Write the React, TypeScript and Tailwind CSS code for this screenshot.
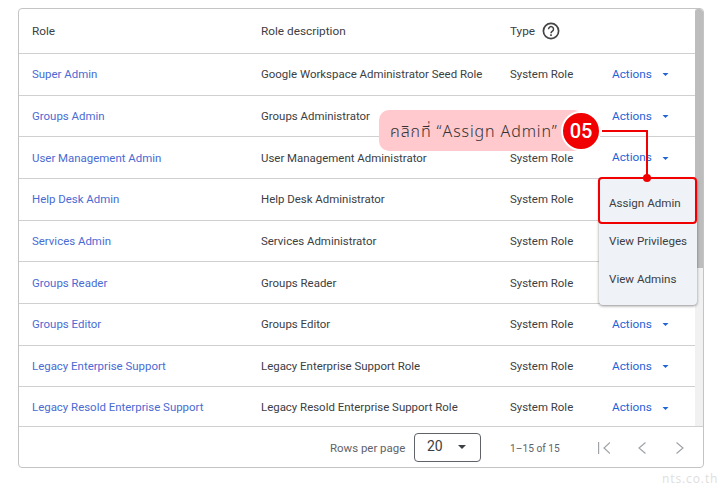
import React from 'react';

const rows = [
  ['Super Admin', 'Google Workspace Administrator Seed Role', true],
  ['Groups Admin', 'Groups Administrator', true],
  ['User Management Admin', 'User Management Administrator', true],
  ['Help Desk Admin', 'Help Desk Administrator', false],
  ['Services Admin', 'Services Administrator', false],
  ['Groups Reader', 'Groups Reader', false],
  ['Groups Editor', 'Groups Editor', true],
  ['Legacy Enterprise Support', 'Legacy Enterprise Support Role', true],
  ['Legacy Resold Enterprise Support', 'Legacy Resold Enterprise Support Role', true],
] as const;

const Caret = ({ className }: { className: string }) => (
  <svg viewBox="0 0 8 4" className={className} fill="currentColor">
    <path d="M0 0h8L4 4z" />
  </svg>
);

export default function App() {
  return (
    <div className="relative h-[491px] w-[720px] overflow-hidden bg-white font-['Roboto',sans-serif] text-[11.45px] text-[#3c4043]">
      <div className="absolute left-[18px] top-[8px] flex h-[460px] w-[686px] flex-col overflow-hidden rounded-[4px] border border-[#c4c4c4]">
        <div className="flex h-[417px] overflow-hidden">
          <div className="min-w-0 flex-1">
            <div className="flex h-[45px] items-center border-b border-[#d0d0d0] pl-[13px] text-[11.8px]">
              <div className="w-[229px] pt-[1px]">Role</div>
              <div className="w-[249px] pt-[1px]">Role description</div>
              <div className="flex items-center gap-[7px]">
                <span className="pt-[1px]">Type</span>
                <svg viewBox="0 0 18 18" className="h-[18px] w-[18px] text-[#444]" fill="none" stroke="currentColor">
                  <circle cx="9" cy="9" r="7.6" strokeWidth="1.7" />
                  <path d="M6.500 7.200a2.500 2.500 0 1 1 3.900 2c-.9.6-1.400 1-1.400 2" strokeWidth="1.500" />
                  <path d="M9 12.300v1.600" strokeWidth="1.600" />
                </svg>
              </div>
            </div>
            {rows.map(([role, desc, hasActions]) => (
              <div key={role} className="flex h-[41.67px] items-center border-b border-[#d0d0d0] pl-[13px] pt-[1px]">
                <div className="w-[229px] text-[#4a6bd3]">{role}</div>
                <div className="w-[249px]">{desc}</div>
                <div className="w-[102px]">System Role</div>
                {hasActions && (
                  <div className="flex items-center text-[11.8px] text-[#1f63d6]">
                    Actions
                    <Caret className="ml-[10px] h-[3px] w-[7px]" />
                  </div>
                )}
              </div>
            ))}
          </div>
          <div className="w-[8px] shrink-0 bg-[#f1f1f1]">
            <div className="h-[259px] rounded-t-[3px] bg-[#bdbdbd]" />
          </div>
        </div>
        <div className="flex flex-1 items-center border-t border-[#d0d0d0] pl-[311px]">
          <span className="w-[84px] pt-[3px] text-[#5f6368]">Rows per page</span>
          <div className="flex h-[29px] w-[67px] items-center rounded-[4px] border border-[#5f6368] pl-[12px] text-[14px]">
            <span className="pb-[1px]">20</span>
            <Caret className="ml-[15px] h-[4px] w-[8px]" />
          </div>
          <span className="ml-[29px] w-[48px] whitespace-nowrap pt-[3px] text-[10.2px] text-[#5f6368]">1–15 of 15</span>
          <div className="ml-[40px] flex items-center pt-[1px] text-[#a0a4a8]">
            <svg viewBox="0 0 12 12" className="h-[12px] w-[12px]" fill="none" stroke="currentColor" strokeWidth="1.200">
              <path d="M.6 0v12M12 .5 6 6l6 5.500" />
            </svg>
            <svg viewBox="0 0 8 12" className="ml-[28px] h-[12px] w-[8px]" fill="none" stroke="currentColor" strokeWidth="1.200">
              <path d="M7.500.5 1 6l6.500 5.500" />
            </svg>
            <svg viewBox="0 0 8 12" className="ml-[30px] h-[12px] w-[8px]" fill="none" stroke="currentColor" strokeWidth="1.200">
              <path d="M.5.5 7 6l-6.500 5.500" />
            </svg>
          </div>
        </div>
      </div>

      {/* dropdown */}
      <div className="absolute left-[599px] top-[178px] h-[127px] w-[98px] rounded-[4px] bg-[#eff2f7] pl-[10px] pt-[18px] text-[11.6px] text-[#3c4043] shadow-[0_1px_3px_rgba(0,0,0,0.45)]">
        <div className="h-[38px] leading-[15px]">Assign Admin</div>
        <div className="h-[38px] whitespace-nowrap leading-[15px]">View Privileges</div>
        <div className="leading-[15px]">View Admins</div>
      </div>
      <div className="absolute left-[598px] top-[177px] h-[47px] w-[99px] rounded-[4px] border-2 border-[#f00000]" />

      {/* callout */}
      <div className="absolute left-[379px] top-[110px] flex h-[41px] w-[205px] items-center rounded-[10px] bg-[#ffc9cd] pl-[11px] font-['Noto_Sans','Noto_Sans_Thai',sans-serif] text-[16px] font-light tracking-[0.9px] text-[#333]">
        คลิกที่ “Assign Admin”
      </div>
      <div className="absolute left-[561px] top-[111px] flex h-[40px] w-[40px] items-center justify-center rounded-full border-2 border-white bg-[#f00000] font-['Roboto',sans-serif] text-[20px] font-medium text-white">
        05
      </div>
      <div className="absolute left-[602px] top-[130px] h-[2px] w-[46px] bg-[#f00000]" />
      <div className="absolute left-[646px] top-[130px] h-[48px] w-[2px] bg-[#f00000]" />
      <div className="absolute left-[643px] top-[174px] h-[8px] w-[8px] rounded-full bg-[#f00000]" />

      <div className="absolute left-[662px] top-[470px] font-['Open_Sans',sans-serif] text-[12px] tracking-[0.9px] text-[#dedede]">nts.co.th</div>
    </div>
  );
}
